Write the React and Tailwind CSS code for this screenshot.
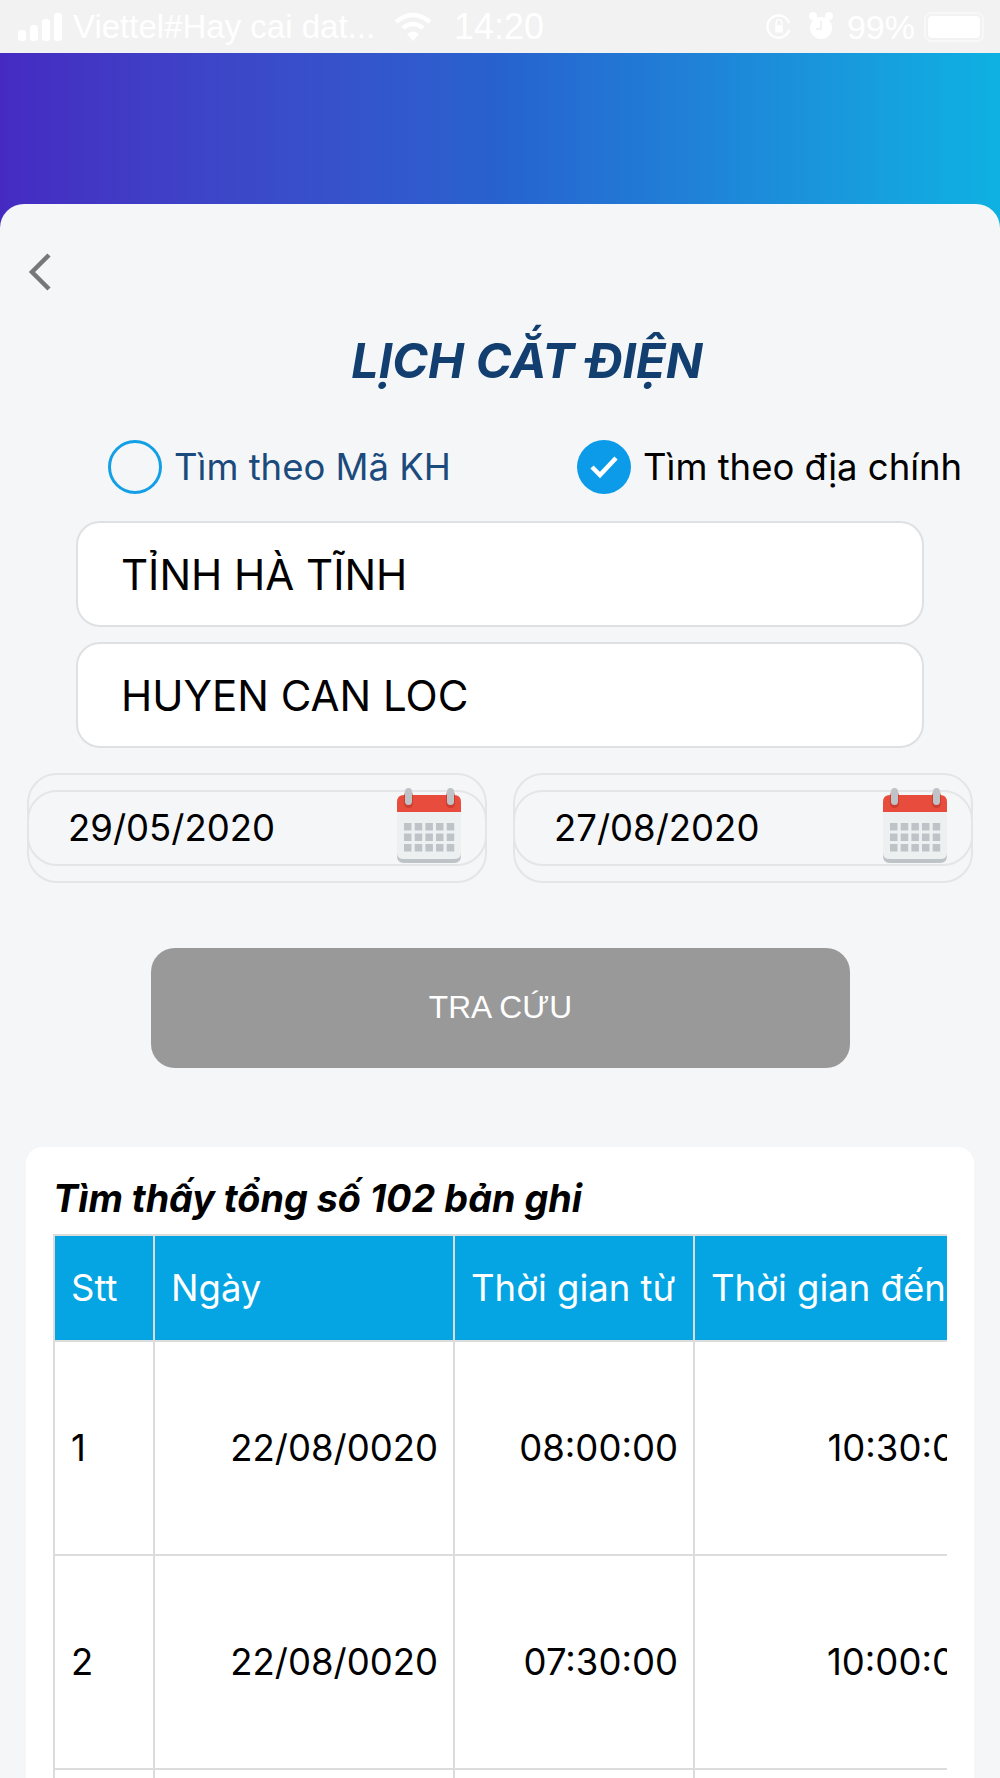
const SANS = "font-['Liberation_Sans',Arial,sans-serif]";
const INTER = "font-['Inter',sans-serif]";

const ROWS = [
	{ stt: "1", date: "22/08/0020", from: "08:00:00", to: "10:30:00" },
	{ stt: "2", date: "22/08/0020", from: "07:30:00", to: "10:00:00" },
	{ stt: "3", date: "22/08/0020", from: "07:30:00", to: "10:00:00" },
];

const CalendarIcon = () => (
	<svg width="66" height="76" viewBox="0 0 66 76" className="shrink-0 -mt-[5px]">
		<path d="M1 52 H65 V68 Q65 75 58 75 H8 Q1 75 1 68 Z" fill="#bdc3c7" />
		<path d="M1 24 H65 V65 Q65 71 58 71 H8 Q1 71 1 65 Z" fill="#ecf0f1" />
		<path d="M1 24 V14 Q1 7 8 7 H58 Q65 7 65 14 V24 Z" fill="#e74c3c" />
		<rect x="8" y="3" width="9" height="17" rx="4.5" fill="#c0392b" opacity="0.7" />
		<rect x="50" y="3" width="9" height="17" rx="4.5" fill="#c0392b" opacity="0.7" />
		<rect x="9" y="0" width="7" height="17" rx="3.5" fill="#bdc3c7" />
		<rect x="51" y="0" width="7" height="17" rx="3.5" fill="#bdc3c7" />
		{[36, 46.5, 57].map((y) =>
			[8, 18.7, 29.4, 40, 50.7].map((x) => (
				<rect key={`${x}-${y}`} x={x} y={y - 1} width="7.5" height="7.5" fill="#bdc3c7" />
			)),
		)}
	</svg>
);

const StatusBar = () => (
	<div className={`flex h-[53px] items-center justify-between bg-[#f2f2f2] pl-[18px] pr-[16px] text-[33px] leading-none text-white ${SANS}`}>
		<div className="flex items-center">
			<svg width="45" height="28" viewBox="0 0 45 28" fill="#fff">
				<rect x="0" y="17" width="8" height="11" rx="3" />
				<rect x="12" y="12" width="8" height="16" rx="3" />
				<rect x="24" y="6" width="8" height="22" rx="3" />
				<rect x="36" y="0" width="8" height="28" rx="3" />
			</svg>
			<span className="ml-[10px] w-[321px] whitespace-nowrap">Viettel#Hay cai dat...</span>
			<svg width="38" height="30" viewBox="0 0 38 30" fill="none" stroke="#fff" strokeWidth="4.5">
				<path d="M2 10 Q19 -4 36 10" />
				<path d="M9 16 Q19 8 29 16" />
				<path d="M19 29 L13 22 Q19 17 25 22 Z" fill="#fff" stroke="none" />
			</svg>
			<span className="ml-[22px] text-[36px]">14:20</span>
		</div>
		<div className="flex items-center">
			<svg width="26" height="28" viewBox="0 0 28 28" fill="none" stroke="#fff" strokeWidth="2.5">
				<path d="M25 17 A12 12 0 1 1 25 10" />
				<rect x="10" y="12" width="8" height="8" fill="#fff" stroke="none" />
				<path d="M11 12 V9 A3 3 0 0 1 17 9 V12" strokeWidth="1.5" />
			</svg>
			<svg width="26" height="30" viewBox="0 0 26 30" fill="#fff" className="ml-[16px]">
				<circle cx="13" cy="16" r="11" />
				<circle cx="5" cy="4" r="4" />
				<circle cx="21" cy="4" r="4" />
				<path d="M13 9 V17 H8" stroke="#f2f2f2" strokeWidth="2" fill="none" />
			</svg>
			<span className="ml-[13px] text-[34px]">99%</span>
			<div className="ml-[9px] flex h-[30px] w-[60px] items-center rounded-[7px] border-2 border-[#f8f8f8] p-[2px]">
				<div className="h-full w-full rounded-[4px] bg-white" />
			</div>
		</div>
	</div>
);

const DateField = ({ value }) => (
	<div className="flex-1 rounded-[30px] border-2 border-[#e4e5e7] py-[15px]">
		<div className="-mx-[2px] flex h-[76px] items-center justify-between rounded-[30px] border-2 border-[#e4e5e7] pl-[39px] pr-[23px]">
			<span className={`text-[36.5px] text-black ${INTER}`}>{value}</span>
			<CalendarIcon />
		</div>
	</div>
);

export default function App() {
	return (
		<div className={`h-[1778px] w-[1000px] overflow-hidden bg-[#f5f6f8] ${SANS}`}>
			<StatusBar />
			<div className="h-[175px] bg-gradient-to-r from-[#452ac2] via-[#2762cf] to-[#0eb1e2]" />
			<div className="relative -mt-[24px] h-[1574px] rounded-t-[24px] bg-[#f5f6f8] pt-[49px]">
				<svg width="24" height="38" viewBox="0 0 24 38" fill="none" stroke="#777" strokeWidth="4.5" className="ml-[28px]">
					<path d="M21 2 L4 19 L21 36" />
				</svg>
				<h1 className={`mt-[42px] pl-[54px] text-center text-[48.4px] font-bold italic leading-[56px] text-[#123f70] ${INTER}`}>
					LỊCH CẮT ĐIỆN
				</h1>
				<div className={`mt-[51px] flex items-center pl-[108px] text-[36.5px] leading-none ${INTER}`}>
					<div className="h-[54px] w-[54px] rounded-full border-[3px] border-[#129fe6]" />
					<span className="ml-[12px] w-[403px] text-[#1b4a7d]">Tìm theo Mã KH</span>
					<div className="flex h-[54px] w-[54px] items-center justify-center rounded-full bg-[#0c9be8]">
						<svg width="30" height="24" viewBox="0 0 30 24" fill="none" stroke="#fff" strokeWidth="4.5">
							<path d="M3 12 L11 20 L27 3" />
						</svg>
					</div>
					<span className="ml-[12px] whitespace-nowrap text-black">Tìm theo địa chính</span>
				</div>
				<div className={`mx-[76px] mt-[27px] flex flex-col gap-[15px] text-[42px] text-black ${INTER}`}>
					<div className="flex h-[106px] items-center rounded-[24px] border-2 border-[#dfe0e2] bg-white pl-[43px]">TỈNH HÀ TĨNH</div>
					<div className="flex h-[106px] items-center rounded-[24px] border-2 border-[#dfe0e2] bg-white pl-[43px]">HUYEN CAN LOC</div>
				</div>
				<div className="mx-[27px] mt-[25px] flex gap-[26px]">
					<DateField value="29/05/2020" />
					<DateField value="27/08/2020" />
				</div>
				<div className="ml-[151px] mr-[150px] mt-[65px] flex h-[120px] items-center justify-center rounded-[24px] bg-[#999999] text-[31.7px] text-white">
					TRA CỨU
				</div>
				<div className="mx-[26px] mt-[79px] h-[700px] rounded-t-[16px] bg-white pl-[27px] pr-[27px] pt-[30px]">
					<div className={`text-[37.7px] font-bold italic leading-[42px] text-black ${INTER}`}>Tìm thấy tổng số 102 bản ghi</div>
					<div className="mt-[15px] overflow-hidden">
						<table className={`w-[940px] table-fixed border-separate border-spacing-0 text-[36.5px] ${INTER}`}>
							<colgroup>
								<col className="w-[100px]" />
								<col className="w-[300px]" />
								<col className="w-[240px]" />
								<col className="w-[300px]" />
							</colgroup>
							<thead>
								<tr className="h-[106px] bg-[#05a5e3] text-left font-normal text-white">
									{["Stt", "Ngày", "Thời gian từ", "Thời gian đến"].map((label) => (
										<th key={label} className="whitespace-nowrap border-l-2 border-t-2 border-[#dcdcdc] pl-[16px] font-normal">
											{label}
										</th>
									))}
								</tr>
							</thead>
							<tbody>
								{ROWS.map((row) => (
									<tr key={row.stt} className="h-[214px] text-black">
										<td className="border-l-2 border-t-2 border-[#dcdcdc] pl-[16px]">{row.stt}</td>
										<td className="border-l-2 border-t-2 border-[#dcdcdc] pr-[15px] text-right">{row.date}</td>
										<td className="border-l-2 border-t-2 border-[#dcdcdc] pr-[15px] text-right">{row.from}</td>
										<td className="border-l-2 border-t-2 border-[#dcdcdc] pr-[15px] text-right">{row.to}</td>
									</tr>
								))}
							</tbody>
						</table>
					</div>
				</div>
			</div>
		</div>
	);
}
